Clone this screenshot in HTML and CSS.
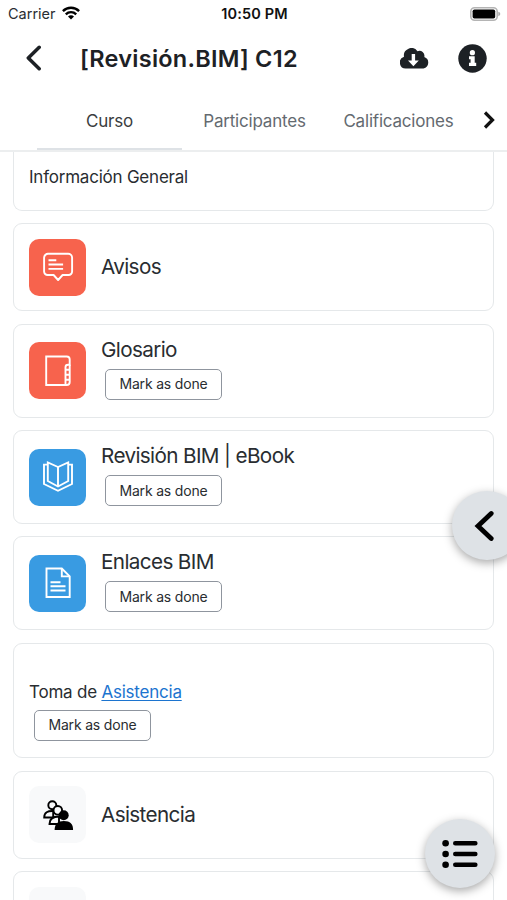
FILE: index.html
```
<!DOCTYPE html>
<html lang="es">
<head>
<meta charset="utf-8">
<title>[Revisión.BIM] C12</title>
<link rel="stylesheet" href="styles.css">
</head>
<body>
<div class="screen">
  <div class="status">
    <div class="carrier"><span>Carrier</span>
      <svg width="18" height="14" viewBox="0 0 18 14" fill="none" stroke="#000" stroke-width="2.4"><path d="M.9 5.1a11.6 11.6 0 0 1 16.2 0"/><path d="M3.8 8.3a7.4 7.4 0 0 1 10.4 0"/><path d="M9 13.5 6 10.6a4.2 4.2 0 0 1 6 0z" fill="#000" stroke="none"/></svg>
    </div>
    <div class="clock">10:50 PM</div>
    <svg class="battery" width="31" height="14" viewBox="0 0 31 14"><rect x=".8" y=".8" width="26.4" height="12.4" rx="3.8" fill="#fff" stroke="#b4b4b4" stroke-width="1.6"/><rect x="2.6" y="2.5" width="22.6" height="9" rx="1.8"/><path d="M28.3 4.8q2 .6 2 2.2t-2 2.2z" fill="#aaa"/></svg>
  </div>
  <header class="bar">
    <svg class="back" width="16" height="26" viewBox="0 0 16 26" fill="none" stroke="#1d2125" stroke-width="3.500" stroke-linecap="round" stroke-linejoin="round"><path d="M14.200 2.300 3.300 13l10.900 10.700"/></svg>
    <h1>[Revisión.BIM] C12</h1>
    <svg class="cloud" width="29" height="21" viewBox="0 0 29 21"><path d="M6.200 20.500A6 6 0 0 1 4 8.800A7.500 7.500 0 0 1 17.500 3.200A5 5 0 0 1 24.300 9A6 6 0 0 1 23.500 20.500z" fill="#1d2125"/><path d="M11.700 6h3.400v6.500h3.700l-5.400 5.800-5.400-5.800h3.700z" fill="#fff"/></svg>
    <svg class="info" width="29" height="29" viewBox="0 0 29 29"><circle cx="14.500" cy="14.500" r="14.200" fill="#1d2125"/><circle cx="14.400" cy="8.700" r="2.600" fill="#fff"/><path d="M11 12.200h5.700v6.600h1.500v3.200h-7.200v-3.200h1.600v-3.600h-1.600z" fill="#fff"/></svg>
  </header>
  <nav class="tabs">
    <div class="tab active"><span>Curso</span></div>
    <div class="tab"><span>Participantes</span></div>
    <div class="tab"><span>Calificaciones</span></div>
    <svg class="next" width="12" height="18" viewBox="0 0 12 18" fill="none" stroke="#111" stroke-width="3.200"><path d="m2 1.500 7.500 7.500-7.500 7.500"/></svg>
  </nav>
  <main class="list">
    <section class="card general"><span class="body-text">Información General</span></section>
    <section class="card short">
      <div class="tile red"><svg width="32" height="32" viewBox="0 0 32 32" fill="none" stroke="#fff" stroke-width="1.900" stroke-linejoin="round"><path d="M5.500 2.800h20.600a4 4 0 0 1 4 4v13.700a3.500 3.500 0 0 1-3.500 3.500h-6l-4.500 5-4.500-5h-6a3.500 3.500 0 0 1-3.500-3.500V6.800a4 4 0 0 1 4-4z"/><path d="M6.500 9.300h7.800M6.500 13.500h14.600M6.500 17.900h14.600"/></svg></div>
      <div class="info-col"><h2>Avisos</h2></div>
    </section>
    <section class="card">
      <div class="tile red"><svg width="32" height="32" viewBox="0 0 32 32" fill="none" stroke="#fff" stroke-width="1.900"><path d="M4.200 1.500h20.500a3 3 0 0 1 3 3v5.300h-1.700a2.500 2.500 0 0 0-2.500 2.500v17.700H4.200z"/><path d="M23.500 30h1.200a3 3 0 0 0 3-3V9.800M24 14.800h3M24 19.800h3M24 24.800h3"/></svg></div>
      <div class="info-col"><h2>Glosario</h2><button class="done">Mark as done</button></div>
    </section>
    <section class="card">
      <div class="tile blue"><svg width="32" height="32" viewBox="0 0 32 32" fill="none" stroke="#fff" stroke-width="1.900"><path d="M16 6 5.800 1.500V20L16 25.500 26.200 20V1.500z"/><path d="M16 6v19.500M5.800 3.600H2v19.400L16 29.800l14-6.800V3.600h-3.800"/></svg></div>
      <div class="info-col"><h2>Revisión BIM | eBook</h2><button class="done">Mark as done</button></div>
    </section>
    <section class="card">
      <div class="tile blue"><svg width="32" height="32" viewBox="0 0 32 32" fill="none" stroke="#fff" stroke-width="1.900"><path d="M4.500 1.500h15.300l7.900 7.900V30H4.500z"/><path d="M19.800 1.500v7.900h7.900M8.500 15.300h10M8.500 19.200h15M8.500 23.500h15"/></svg></div>
      <div class="info-col"><h2>Enlaces BIM</h2><button class="done">Mark as done</button></div>
    </section>
    <section class="card note">
      <p class="body-text">Toma de <a>Asistencia</a></p>
      <button class="done">Mark as done</button>
    </section>
    <section class="card short">
      <div class="tile pale"><svg width="32" height="32" viewBox="0 0 32 32"><g fill="#f8f9fa" stroke="#000" stroke-width="1.900"><path d="M2.200 18.500c0-5 3.500-6.800 9-6.500v6.500z"/><circle cx="10.300" cy="6.200" r="4"/><path d="M7.500 25c0-5 3.500-7.500 9.500-7.500V25z"/><circle cx="15.800" cy="11.300" r="4.300"/></g><circle cx="21.700" cy="16.300" r="5"/><path d="M12.600 31c0-6 3-9.100 9.300-9.100s9.200 3 9.200 9.100z"/></svg></div>
      <div class="info-col"><h2>Asistencia</h2></div>
    </section>
    <section class="card short"><div class="tile pale"></div></section>
  </main>
  <div class="drawer"><svg width="21" height="32" viewBox="0 0 21 32" fill="none" stroke="#000" stroke-width="4.800" stroke-linecap="round"><path d="M18.200 3.500 5 16l13.200 12.500"/></svg></div>
  <div class="index"><svg width="36" height="30" viewBox="0 0 36 30"><circle cx="3.600" cy="4.300" r="3.300"/><circle cx="3.600" cy="15" r="3.300"/><circle cx="3.600" cy="25.700" r="3.300"/><path d="M13.300 4.300h20M13.300 15h20M13.300 25.700h20" stroke="#000" stroke-width="4.600" stroke-linecap="round"/></svg></div>
</div>
</body>
</html>
```

FILE: styles.css
```
* { box-sizing: border-box; }
body { margin: 0; background: #fff; color: #292d31; font-family: Inter, "Liberation Sans", sans-serif; }
h1, h2, p { margin: 0; }
svg { display: block; flex: none; }
.screen { position: relative; width: 507px; height: 900px; overflow: hidden; display: flex; flex-direction: column; }
.status { height: 27px; flex: none; display: grid; grid-template-columns: 1fr auto 1fr; align-items: center; padding: 0 6px 0 8px; }
.carrier { display: flex; align-items: center; gap: 6px; font-size: 14.5px; }
.carrier svg { margin-top: -2px; }
.clock { font-size: 14.5px; font-weight: 600; color: #111; letter-spacing: .15px; }
.battery { justify-self: end; }
.bar { height: 62px; flex: none; display: flex; align-items: center; padding: 0 20px 0 25px; }
h1 { margin: 1px 0 0 39px; flex: 1; font-size: 23.500px; font-weight: 600; letter-spacing: .25px; color: #1d2125; white-space: nowrap; }
.info { margin-left: 29px; }
.tabs { height: 63px; flex: none; display: flex; border-bottom: 2px solid #eceeef; padding: 0 12px 0 37px; }
.tab { width: 145px; display: flex; align-items: center; justify-content: center; padding-top: 4px; font-size: 17px; letter-spacing: -.2px; color: #646a70; white-space: nowrap; border-bottom: 2px solid transparent; }
.tab:nth-child(3) { width: 143px; }
.tab.active { color: #3b3e41; border-bottom-color: #dee2e6; }
.next { margin: 22px 0 0 auto; }
.list { flex: none; display: flex; flex-direction: column; gap: 12.600px; padding: 0 13px; }
.card { height: 93.700px; border: 1.500px solid #e5e8ea; border-radius: 9px; padding: 0 15px; display: flex; align-items: center; flex: none; }
.card.short { height: 88px; }
.card.general { height: 58.700px; border-top: 0; border-radius: 0 0 9px 9px; align-items: flex-start; padding-top: 14px; }
.body-text { font-size: 17px; line-height: 22px; letter-spacing: -.22px; white-space: nowrap; }
.tile { width: 57px; height: 57px; border-radius: 10px; display: flex; align-items: center; justify-content: center; flex: none; }
.red { background: #f7634d; }
.blue { background: #399be2; }
.pale { background: #f8f9fa; }
.info-col { margin-left: 15px; display: flex; flex-direction: column; align-items: flex-start; }
.card:not(.short) .info-col { margin-top: -6px; }
h2 { font-size: 20.700px; line-height: 28px; font-weight: 400; letter-spacing: -.63px; white-space: nowrap; }
.done { margin: 5px 0 0 4px; width: 117px; height: 31px; padding: 0 0 1px; border: 1px solid #8f959e; border-radius: 5px; background: #fff; color: #292d31; font: 14px Inter, "Liberation Sans", sans-serif; letter-spacing: -.18px; white-space: nowrap; }
.card.note { height: 115.500px; flex-direction: column; align-items: flex-start; padding-top: 37px; }
.note .done { margin-top: 7px; margin-left: 5px; }
a { color: #1c74cf; text-decoration: underline; text-underline-offset: 2px; }
.drawer { position: absolute; left: 452px; top: 491px; width: 70px; height: 69px; border-radius: 35px; background: #dee2e6; box-shadow: 0 3px 10px rgba(0,0,0,.34); display: flex; align-items: center; padding-left: 21px; }
.index { position: absolute; left: 425px; top: 819px; width: 70px; height: 69px; border-radius: 50%; background: #dee2e6; box-shadow: 0 3px 10px rgba(0,0,0,.34); display: flex; align-items: center; justify-content: center; }
```
